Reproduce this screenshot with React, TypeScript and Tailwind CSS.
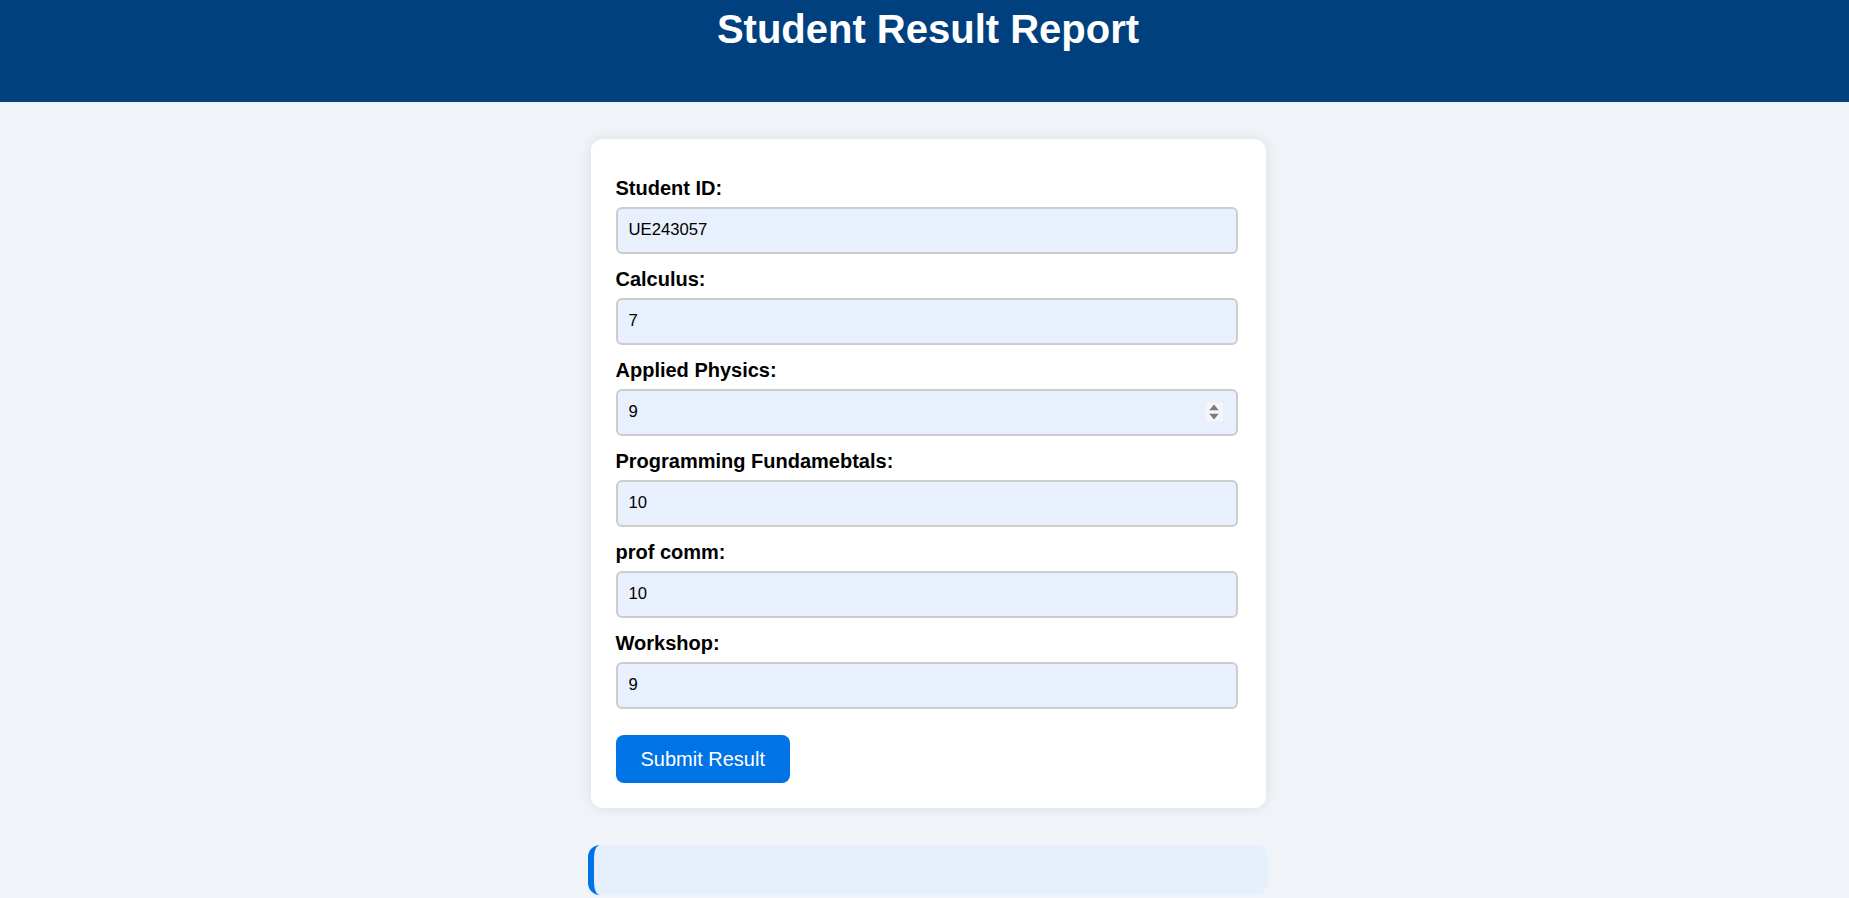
import { useState } from "react";

const fields = [
  { id: "studentId", label: "Student ID:", type: "text", value: "UE243057" },
  { id: "calculus", label: "Calculus:", type: "number", value: "7" },
  { id: "physics", label: "Applied Physics:", type: "number", value: "9", spin: true },
  { id: "pf", label: "Programming Fundamebtals:", type: "number", value: "10" },
  { id: "comm", label: "prof comm:", type: "number", value: "10" },
  { id: "workshop", label: "Workshop:", type: "number", value: "9" },
];

function Spinner() {
  return (
    <div className="absolute right-[15px] top-1/2 -translate-y-1/2 w-[17px] h-[19px] bg-[#f4f6fa] flex flex-col items-center justify-center gap-[3px]">
      <svg width="10" height="6" viewBox="0 0 10 6">
        <path d="M5 0 L10 6 L0 6 Z" fill="#7b7b7b" />
      </svg>
      <svg width="10" height="6" viewBox="0 0 10 6">
        <path d="M0 0 L10 0 L5 6 Z" fill="#7b7b7b" />
      </svg>
    </div>
  );
}

export default function App() {
  const [values, setValues] = useState<Record<string, string>>(
    Object.fromEntries(fields.map((f) => [f.id, f.value]))
  );

  return (
    <div
      className="min-h-screen bg-[#f0f4f8] text-black"
      style={{ fontFamily: '"Liberation Sans", Arial, sans-serif' }}
    >
      <header className="h-[102px] bg-[#00407f] pt-[6px] pl-[7px]">
        <h1 className="text-center text-white font-bold text-[40px] leading-[46px]">
          Student Result Report
        </h1>
      </header>

      <div className="flex flex-col items-center pt-[37px] pl-[7px]">
        <form
          className="w-[675px] bg-white rounded-[12px] shadow-[0_0_14px_rgba(0,0,0,0.09)] px-[25px] pt-[38px] pb-[25px]"
          onSubmit={(e) => e.preventDefault()}
        >
          {fields.map((f) => (
            <div key={f.id} className="mb-[14px]">
              <label
                htmlFor={f.id}
                className="block text-[20px] leading-[23px] font-bold mb-[6.5px]"
              >
                {f.label}
              </label>
              <div className="relative w-[622px]">
                <input
                  id={f.id}
                  type="text"
                  value={values[f.id]}
                  onChange={(e) => setValues({ ...values, [f.id]: e.target.value })}
                  className="w-full h-[47.5px] bg-[#e8f0fe] border-2 border-[#cccccc] rounded-[6px] px-[11px] text-[16.67px] outline-none"
                />
                {f.spin && <Spinner />}
              </div>
            </div>
          ))}
          <button
            type="submit"
            className="mt-[12px] h-[47.5px] px-[25px] bg-[#0073e6] text-white text-[20px] rounded-[8px]"
          >
            Submit Result
          </button>
        </form>

        <div className="mt-[37px] w-[680px] h-[50px] bg-[#e6f0fd] border-l-[6px] border-[#0073e6] rounded-[12px]"></div>
      </div>
    </div>
  );
}
